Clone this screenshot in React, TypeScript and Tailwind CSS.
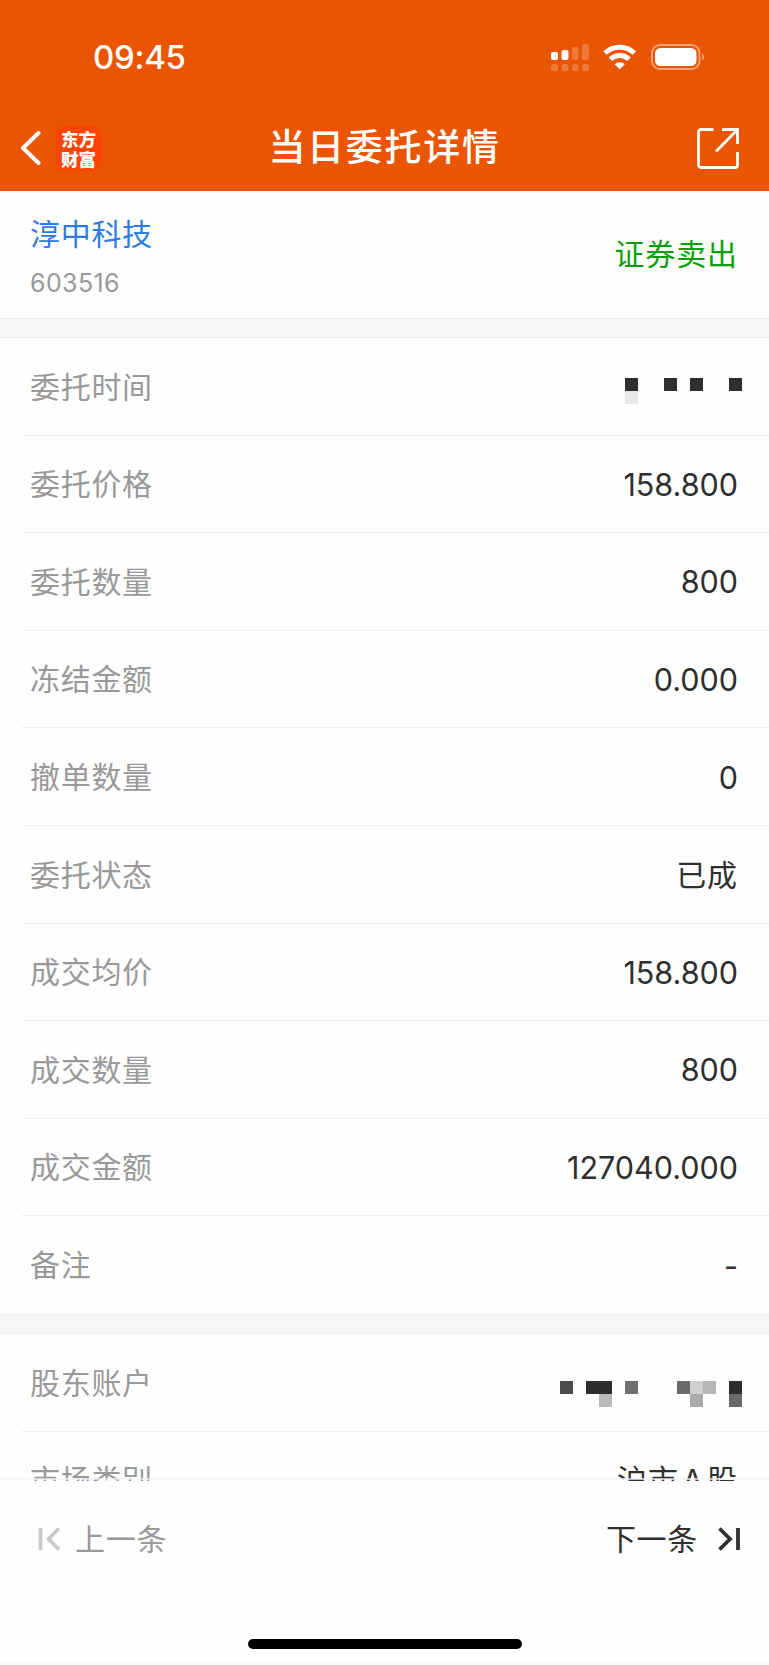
import { clsx } from "clsx";
import type { ReactNode } from "react";

const MASKED_TIME = ["#2f2f2f", "", "", "#2f2f2f", "", "#2f2f2f", "", "", "#2f2f2f", "#e8e8e8", "", "", "", "", "", "", "", ""];

const MASKED_ACCOUNT = [
  "#4b4b4b", "", "#2e2e2e", "#2e2e2e", "", "#707070", "", "", "", "#6a6a6a", "#cfcfcf", "#b6b6b6", "", "#2e2e2e",
  "", "", "", "#bababa", "", "", "", "", "", "", "#aaaaaa", "", "", "#6a6a6a",
];

const orderRows = [
  { label: "委托价格", value: "158.800" },
  { label: "委托数量", value: "800" },
  { label: "冻结金额", value: "0.000" },
  { label: "撤单数量", value: "0" },
  { label: "委托状态", value: "已成", cjk: true },
  { label: "成交均价", value: "158.800" },
  { label: "成交数量", value: "800" },
  { label: "成交金额", value: "127040.000" },
  { label: "备注", value: "-" },
];

const App = () => {
  return (
    <div className="flex h-[1665px] w-[769px] flex-col overflow-hidden bg-[#fefefe] font-['Inter','Noto_Sans_CJK_SC',sans-serif] text-[#2f2f2f]">
      <Header />

      <main className="h-[1290px] shrink-0 overflow-hidden">
        <section className="flex h-[127px] items-center justify-between pl-[30px] pr-[31px]">
          <div className="flex flex-col pt-[6px]">
            <span className="text-[30px] leading-[44px] tracking-[0.7px] text-[#2f7ce0]">
              淳中科技
            </span>
            <span className="mt-[7px] text-[25px] leading-[40px] tracking-[0.4px] text-[#999]">
              603516
            </span>
          </div>
          <span className="-mt-px text-[30px] tracking-[0.9px] text-[#0a9f0a]">
            证券卖出
          </span>
        </section>

        <Divider />

        <section>
          <Row label="委托时间">
            <Mosaic cells={MASKED_TIME} className="mt-[9px] grid-cols-[repeat(9,13px)]" />
          </Row>
          {orderRows.map((row, i) => (
            <Row
              key={row.label}
              label={row.label}
              last={i === orderRows.length - 1}
            >
              <Value cjk={row.cjk}>{row.value}</Value>
            </Row>
          ))}
        </section>

        <Divider />

        <section>
          <Row label="股东账户">
            <Mosaic cells={MASKED_ACCOUNT} className="mt-[16px] grid-cols-[repeat(14,13px)]" />
          </Row>
          <Row label="市场类别">
            <Value cjk>沪市 A 股</Value>
          </Row>
        </section>
      </main>

      <Footer />
    </div>
  );
};

const Header = () => {
  return (
    <header className="h-[191px] shrink-0 bg-[#e95502] text-white">
      <div className="flex h-[103px] items-start justify-between pl-[93px] pr-[64px] pt-[37px]">
        <span className="text-[33px] font-[540] leading-[41px] tracking-[-0.3px]">
          09:45
        </span>
        <div className="flex pt-[6px]">
          <SignalIcon />
          <WifiIcon />
          <BatteryIcon />
        </div>
      </div>

      <div className="grid h-[88px] grid-cols-[1fr_auto_1fr] items-start">
        <div className="flex pl-[19px] pt-[22px]">
          <svg width="22" height="36" viewBox="0 0 22 36" fill="none" className="mt-[5px]">
            <path d="M19.5 3 4 18l15.5 15" stroke="white" strokeWidth="4" strokeLinecap="round" strokeLinejoin="round" />
          </svg>
          <div className="ml-[15px] mt-[1px] flex h-[45px] w-[45px] flex-col items-center justify-center rounded-[9px] bg-[#fb4304] font-['Noto_Sans_CJK_SC',sans-serif] text-[17.5px] font-black leading-[19.5px]">
            <span>东方</span>
            <span>财富</span>
          </div>
        </div>
        <h1 className="pt-[19px] text-[37px] font-medium leading-[52px] tracking-[1.7px]">
          当日委托详情
        </h1>
        <svg width="44" height="44" viewBox="0 0 44 44" fill="none" className="mr-[29px] mt-[24px] justify-self-end">
          <path d="M17.5 2.5H5a2.5 2.5 0 0 0-2.5 2.5v33A2.5 2.5 0 0 0 5 40.5h34a2.5 2.5 0 0 0 2.5-2.5V25M26 2.5h15.5V17M41 3 20 24.5" stroke="white" strokeWidth="2.8" />
        </svg>
      </div>
    </header>
  );
};

const SignalIcon = () => (
  <svg width="40" height="30" viewBox="0 0 40 30" fill="white">
    <rect x="1" y="9" width="7" height="8" rx="2" />
    <rect x="11.5" y="7" width="7" height="10" rx="2" />
    <g opacity="0.22">
      <rect x="22" y="4" width="6.5" height="13" rx="2" />
      <rect x="32" y="1" width="7" height="16" rx="2" />
      <rect x="1" y="21" width="7" height="7" rx="2.5" />
      <rect x="11.5" y="21" width="7" height="7" rx="2.5" />
      <rect x="22" y="21" width="6.5" height="7" rx="2.5" />
      <rect x="32" y="21" width="7" height="7" rx="2.5" />
    </g>
  </svg>
);

const WifiIcon = () => (
  <svg width="34" height="28" viewBox="0 0 34 28" className="ml-[13px]">
    <g fill="none" stroke="white" strokeWidth="5">
      <path d="M2 10a21.5 21.5 0 0 1 29.4 0" />
      <path d="M7.4 16.3a13.5 13.5 0 0 1 18.6 0" />
    </g>
    <path d="M16.7 26.500 11.600 21.300a7.600 7.600 0 0 1 10.200 0z" fill="white" />
  </svg>
);

const BatteryIcon = () => (
  <svg width="54" height="28" viewBox="0 0 54 28" className="ml-[14px]">
    <rect x="1" y="2" width="47.5" height="24" rx="8" fill="none" stroke="white" strokeOpacity="0.45" strokeWidth="2" />
    <rect x="4" y="5" width="41.5" height="18" rx="5.5" fill="white" />
    <path d="M51 10.500c2.800 1 2.800 6 0 7z" fill="white" fillOpacity="0.45" />
  </svg>
);

const Divider = () => (
  <div className="h-[20px] border-y border-[#ededed] bg-[#f7f7f8]" />
);

type RowProps = {
  label: string;
  last?: boolean;
  children: ReactNode;
};

const Row = ({ label, last, children }: RowProps) => {
  return (
    <div
      className={clsx(
        "ml-[21px] flex h-[97.6px] justify-between border-b pl-[9px]",
        last ? "border-transparent" : "border-[#f1f1f1]"
      )}
    >
      <span className="pt-[26.7px] text-[30px] leading-[44px] tracking-[0.7px] text-[#999]">
        {label}
      </span>
      <div className="pr-[27px] pt-[30.7px]">{children}</div>
    </div>
  );
};

const Value = ({ cjk, children }: { cjk?: boolean; children: ReactNode }) => (
  <span
    className={clsx(
      "mr-[4px] block leading-[44px]",
      cjk
        ? "-mt-[4px] text-[30px] tracking-[0.9px] [word-spacing:-6px]"
        : "-mt-[3.5px] text-[30.5px]"
    )}
  >
    {children}
  </span>
);

// Blocks covering private values, one colour per cell
const Mosaic = ({ cells, className }: { cells: string[]; className: string }) => (
  <div className={clsx("grid auto-rows-[13px]", className)}>
    {cells.map((color, i) => (
      <div key={i} style={{ backgroundColor: color || "transparent" }} />
    ))}
  </div>
);

const Footer = () => {
  return (
    <footer className="relative flex flex-1 flex-col bg-[#fefefe]">
      <div className="absolute -top-[3px] h-[2px] w-full bg-[#f1f1f1]/70" />
      <nav className="flex justify-between pl-[37px] pr-[28px] pt-[36px] text-[30px] leading-[44px] tracking-[0.7px]">
        <button className="flex text-[#999]">
          <svg width="24" height="24" viewBox="0 0 24 24" fill="none" className="mt-[10px]">
            <path d="M3.5 1v22M22 1.500 11.500 12 22 22.500" stroke="#c8c8c8" strokeWidth="3.6" />
          </svg>
          <span className="ml-[14px]">上一条</span>
        </button>
        <button className="flex">
          <span>下一条</span>
          <svg width="24" height="24" viewBox="0 0 24 24" fill="none" className="ml-[19px] mt-[10px]">
            <path d="M21 1v22M2.500 1.500 13 12 2.500 22.500" stroke="#2f2f2f" strokeWidth="3.8" />
          </svg>
        </button>
      </nav>
      <div className="mx-auto mt-auto mb-[13px] h-[10px] w-[274px] rounded-full bg-black" />
      <div className="h-[3px] bg-[#f8f8f8]" />
    </footer>
  );
};

export default App;
